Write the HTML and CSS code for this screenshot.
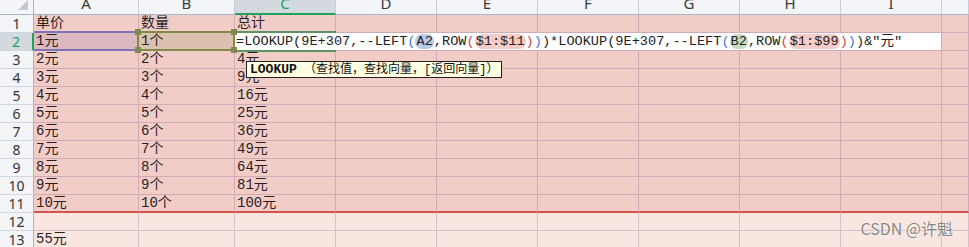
FILE: index.html
```html
<!DOCTYPE html>
<html>
<head>
<meta charset="utf-8">
<title>LOOKUP</title>
<link rel="stylesheet" href="styles.css">
</head>
<body>
<div class="sheet">
    <div class="corner"><i class="tri"></i></div>
    <div class="ch"><span>A</span></div>
    <div class="ch"><span>B</span></div>
    <div class="ch on"><span>C</span></div>
    <div class="ch"><span>D</span></div>
    <div class="ch"><span>E</span></div>
    <div class="ch"><span>F</span></div>
    <div class="ch"><span>G</span></div>
    <div class="ch"><span>H</span></div>
    <div class="ch"><span>I</span></div>
    <div class="ch"></div>

    <!-- 1 -->
    <div class="rh">1</div>
    <div class="c">单价</div><div class="c">数量</div><div class="c">总计</div>
    <div class="c"></div><div class="c"></div><div class="c"></div><div class="c"></div><div class="c"></div><div class="c"></div><div class="c"></div>

    <!-- 2 -->
    <div class="rh on">2</div>
    <div class="c ra">1元</div><div class="c rb">1个</div>
    <div class="c ed">=LOOKUP(9E+307,--LEFT<span class="pb">(</span><span class="pill pa">A2</span>,ROW<span class="pr">(</span><span class="pill ps">$1:$11</span><span class="pr">)</span><span class="pb">)</span>)*LOOKUP(9E+307,--LEFT<span class="pb">(</span><span class="pill pg">B2</span>,ROW<span class="pr">(</span><span class="pill ps">$1:$99</span><span class="pr">)</span><span class="pb">)</span>)&amp;"元"</div>
    <div class="c"></div>

    <!-- 3 -->
    <div class="rh">3</div>
    <div class="c">2元</div><div class="c">2个</div><div class="c">4元</div>
    <div class="c"></div><div class="c"></div><div class="c"></div><div class="c"></div><div class="c"></div><div class="c"></div><div class="c"></div>

    <!-- 4 -->
    <div class="rh">4</div>
    <div class="c">3元</div><div class="c">3个</div><div class="c">9元</div>
    <div class="c"></div><div class="c"></div><div class="c"></div><div class="c"></div><div class="c"></div><div class="c"></div><div class="c"></div>

    <!-- 5 -->
    <div class="rh">5</div>
    <div class="c">4元</div><div class="c">4个</div><div class="c">16元</div>
    <div class="c"></div><div class="c"></div><div class="c"></div><div class="c"></div><div class="c"></div><div class="c"></div><div class="c"></div>

    <!-- 6 -->
    <div class="rh">6</div>
    <div class="c">5元</div><div class="c">5个</div><div class="c">25元</div>
    <div class="c"></div><div class="c"></div><div class="c"></div><div class="c"></div><div class="c"></div><div class="c"></div><div class="c"></div>

    <!-- 7 -->
    <div class="rh">7</div>
    <div class="c">6元</div><div class="c">6个</div><div class="c">36元</div>
    <div class="c"></div><div class="c"></div><div class="c"></div><div class="c"></div><div class="c"></div><div class="c"></div><div class="c"></div>

    <!-- 8 -->
    <div class="rh">8</div>
    <div class="c">7元</div><div class="c">7个</div><div class="c">49元</div>
    <div class="c"></div><div class="c"></div><div class="c"></div><div class="c"></div><div class="c"></div><div class="c"></div><div class="c"></div>

    <!-- 9 -->
    <div class="rh">9</div>
    <div class="c">8元</div><div class="c">8个</div><div class="c">64元</div>
    <div class="c"></div><div class="c"></div><div class="c"></div><div class="c"></div><div class="c"></div><div class="c"></div><div class="c"></div>

    <!-- 10 -->
    <div class="rh">10</div>
    <div class="c">9元</div><div class="c">9个</div><div class="c">81元</div>
    <div class="c"></div><div class="c"></div><div class="c"></div><div class="c"></div><div class="c"></div><div class="c"></div><div class="c"></div>

    <!-- 11 -->
    <div class="rh">11</div>
    <div class="c end">10元</div><div class="c end">10个</div><div class="c end">100元</div>
    <div class="c end"></div><div class="c end"></div><div class="c end"></div><div class="c end"></div><div class="c end"></div><div class="c end"></div><div class="c end"></div>

    <!-- 12 -->
    <div class="rh">12</div>
    <div class="c lo"></div><div class="c lo"></div><div class="c lo"></div>
    <div class="c lo"></div><div class="c lo"></div><div class="c lo"></div><div class="c lo"></div><div class="c lo"></div><div class="c lo"></div><div class="c lo"></div>

    <!-- 13 -->
    <div class="rh">13</div>
    <div class="c lo">55元</div><div class="c lo"></div><div class="c lo"></div>
    <div class="c lo"></div><div class="c lo"></div><div class="c lo"></div><div class="c lo"></div><div class="c lo"></div><div class="c lo"></div><div class="c lo"></div>

    <!-- 函数提示 -->
    <div class="tip"><b>LOOKUP</b> （查找值，查找向量，[返回向量]）</div>
    <div class="mark">CSDN @许魁</div>
</div>
</body>
</html>
```

FILE: styles.css
```css
body { margin: 0; background: #f9e6e1; overflow: hidden; }
.sheet { position: relative; display: grid; grid-template-columns: 34px 105px 96px 101px repeat(6, 101px) 1fr; grid-template-rows: 15px repeat(13, 18px); width: 969px; height: 247px; overflow: hidden; font: 14px/17px "Liberation Mono", "Noto Sans CJK SC", monospace; color: #2a1f1f; }
.sheet > div { box-sizing: border-box; min-width: 0; }

/* 表头 */
.corner { background: #f3f5f8; border-right: 1px solid #aab4c8; border-bottom: 1px solid #aab4c8; display: flex; justify-content: flex-end; align-items: flex-end; padding: 0 5px 4px 0; }
.tri { width: 0; height: 0; border-left: 10px solid transparent; border-bottom: 10px solid #c6cad2; }
.ch { background: #f3f5f8; border-right: 1px solid #c8cdd8; border-bottom: 1px solid #aab4c8; text-align: center; overflow: hidden; font: 15px/15px "Noto Sans", sans-serif; color: #3a3a3a; }
.ch span { display: block; margin-top: -4px; }
.ch.on { background: #d4d8df; border-bottom: 2px solid #20a35c; color: #20a35c; }
.rh { background: #f3f5f8; border-right: 1px solid #aab4c8; border-bottom: 1px solid #d0d5de; text-align: center; font: 14px/17px "Noto Sans", sans-serif; color: #333; }
.rh.on { background: #d4d8df; border-right: 2px solid #20a35c; color: #20a35c; }

/* 单元格 */
.c { background: #f2cdc8; border-right: 1px solid #d0aab6; border-bottom: 1px solid #d0aab6; padding-left: 2px; white-space: nowrap; }
.c.end { border-bottom: 2px solid #d4534e; }
.c.lo { background: #f9e6e1; border-right-color: #d7c0c9; border-bottom-color: #d7c0c9; }

/* 引用区域 */
.c.ra { background: #dcb9be; position: relative; }
.c.ra::after { content: ""; position: absolute; left: 0; right: -1px; top: -2px; bottom: -1px; border-top: 2px solid #7c74b6; border-bottom: 2px solid #7c74b6; }
.c.rb { background: #dcc1ae; position: relative; }
.c.rb::before { content: ""; position: absolute; left: -2px; right: -1px; top: -2px; bottom: -1px; border: 2px solid #7f8a4c; z-index: 2; }
.c.rb::after { content: ""; position: absolute; left: -4px; top: -4px; width: 6px; height: 6px; background: #7f8a4c; box-shadow: 96px 0 0 #7f8a4c, 0 18px 0 #7f8a4c, 96px 18px 0 #7f8a4c; z-index: 3; }

/* 编辑中的公式 */
.c.ed { grid-column: span 7; background: #fff; position: relative; padding-left: 1px; font-size: 13.6px; color: #222; z-index: 1; }
.c.ed::before { content: ""; position: absolute; left: 0; top: -2px; width: 101px; height: 17px; border-top: 2px solid #5d9467; border-bottom: 2px solid #5d9467; }
.pb { color: #3c78d8; }
.pr { color: #d04a4a; }
.pill { border-radius: 7px; padding: 0 1px; }
.pa { background: #bccaea; }
.pg { background: #c9dcc3; }
.ps { background: #f6cdc6; }

/* 提示框 */
.tip { position: absolute; left: 246px; top: 61px; height: 17px; box-sizing: border-box; padding: 0 3px; background: #ffffe1; border: 1px solid #222; font: 12px/15px "Liberation Mono", "Noto Sans CJK SC", monospace; color: #111; white-space: nowrap; z-index: 5; }
.tip b { font-size: 13px; }

.mark { position: absolute; right: 16px; bottom: 7px; font: 16px "Noto Sans CJK SC", sans-serif; color: rgba(95, 95, 95, 0.75); text-shadow: 0 0 2px #fff; z-index: 5; }
```
